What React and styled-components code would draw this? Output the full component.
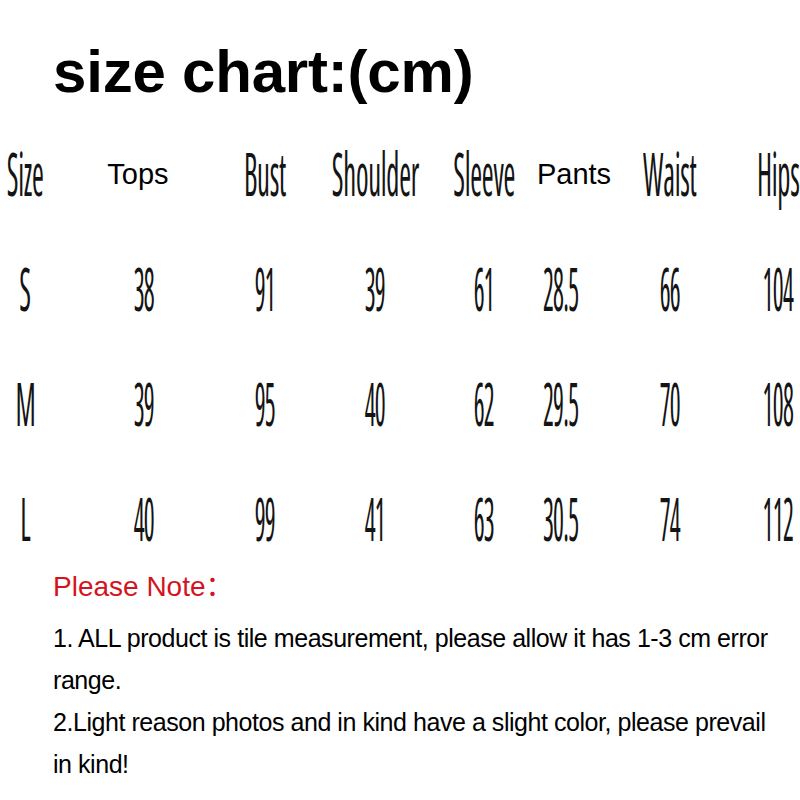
import React from "react";
import styled, { createGlobalStyle } from "styled-components";

const GlobalStyle = createGlobalStyle`
  html, body {
    margin: 0;
    padding: 0;
    background: #ffffff;
  }
  body {
    font-family: "Liberation Sans", Arial, sans-serif;
    color: #000;
  }
`;

const Page = styled.div`
  width: 800px;
  height: 800px;
  padding-top: 42px;
  box-sizing: border-box;
  overflow: hidden;
  background: #fff;
`;

const Title = styled.h1`
  margin: 0;
  padding-left: 53px;
  font-family: "Liberation Sans", Arial, sans-serif;
  font-weight: 700;
  font-size: 60px;
  line-height: 60px;
  color: #000;
  letter-spacing: -0.2px;
`;

const Table = styled.div`
  margin-top: 36px;
  width: 800px;
  display: grid;
  grid-template-columns: 84px 120px 116px 110px 93px 92px 109px 76px;
  grid-auto-rows: 72px;
  row-gap: 43px;
`;

const Cell = styled.div`
  display: flex;
  align-items: center;
  justify-content: center;
  box-sizing: border-box;
  height: 72px;
  padding-left: ${(p) => (p.$shift > 0 ? p.$shift * 2 : 0)}px;
  padding-right: ${(p) => (p.$shift < 0 ? -p.$shift * 2 : 0)}px;
`;

const Cond = styled.span`
  display: inline-block;
  white-space: nowrap;
  font-family: "Open Sans", "Noto Sans", sans-serif;
  font-weight: 400;
  font-stretch: 75%;
  font-size: 29.8px;
  line-height: 30px;
  color: #141414;
  letter-spacing: ${(p) => (p.$numeric ? "-0.8px" : "-0.3px")};
  transform: ${(p) => (p.$numeric ? "scale(0.86, 2.02)" : "scale(0.96, 2.02)")};
  transform-origin: center center;
`;

const PlainHead = styled.span`
  white-space: nowrap;
  font-family: "Liberation Sans", Arial, sans-serif;
  font-size: 29px;
  line-height: 72px;
  color: #000;
`;

const Notes = styled.div`
  margin-top: 11px;
  padding-left: 53px;
`;

const NoteTitle = styled.div`
  font-family: "Liberation Sans", Arial, "Noto Sans CJK SC", sans-serif;
  font-size: 28px;
  line-height: 42px;
  color: #d4141c;
`;

const NoteText = styled.p`
  margin: ${(p) => (p.$first ? "9px" : "0")} 0 0 0;
  width: 728px;
  font-family: "Liberation Sans", Arial, sans-serif;
  font-size: 25px;
  letter-spacing: -0.45px;
  line-height: 42px;
  color: #000;
`;

/* offset of each column's centre from the centre of its grid track */
const colShift = [-17, 0, 3, 0, 7.5, -8, 0, 16];

const headers = [
  { label: "Size" },
  { label: "Tops", plain: true, shift: -6 },
  { label: "Bust" },
  { label: "Shoulder" },
  { label: "Sleeve" },
  { label: "Pants", plain: true, shift: 5 },
  { label: "Waist" },
  { label: "Hips" },
];

const rows = [
  ["S", "38", "91", "39", "61", "28.5", "66", "104"],
  ["M", "39", "95", "40", "62", "29.5", "70", "108"],
  ["L", "40", "99", "41", "63", "30.5", "74", "112"],
];

export default function App() {
  return (
    <>
      <GlobalStyle />
      <Page>
        <Title>size chart:(cm)</Title>
        <Table>
          {headers.map((h, i) => (
            <Cell key={h.label} $shift={h.shift ?? colShift[i]}>
              {h.plain ? <PlainHead>{h.label}</PlainHead> : <Cond>{h.label}</Cond>}
            </Cell>
          ))}
          {rows.map((r) =>
            r.map((v, i) => (
              <Cell key={r[0] + i} $shift={colShift[i]}>
                <Cond $numeric={i > 0}>{v}</Cond>
              </Cell>
            ))
          )}
        </Table>
        <Notes>
          <NoteTitle>Please Note：</NoteTitle>
          <NoteText $first>
            1. ALL product is tile measurement, please allow it has 1-3 cm error range.
          </NoteText>
          <NoteText>
            2.Light reason photos and in kind have a slight color, please prevail in kind!
          </NoteText>
        </Notes>
      </Page>
    </>
  );
}
